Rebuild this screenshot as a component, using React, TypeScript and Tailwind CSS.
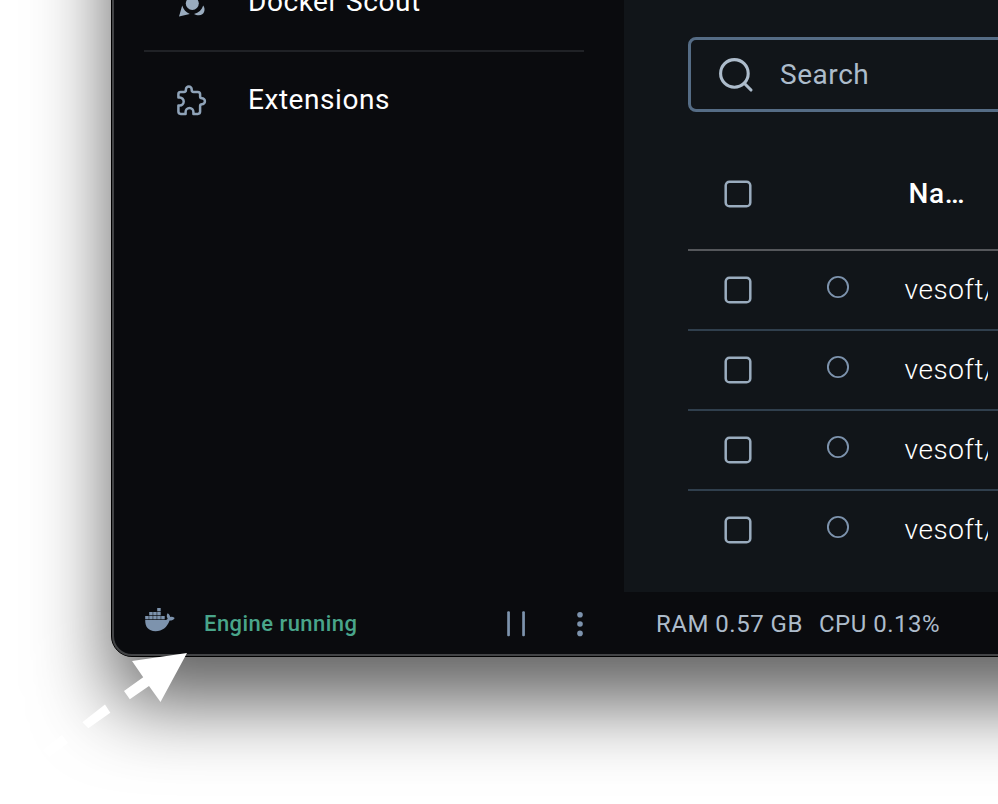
import React from "react";

function ScoutIcon() {
  return (
    <svg className="h-8 w-8 shrink-0" viewBox="0 0 32 32" fill="#9aacbe">
      <circle cx="16.3" cy="17.5" r="6.5" />
      <path d="M6.2 19.5C7.5 23.5 10 26.4 13.8 27.9L3 30.6Z" />
      <path d="M18 28C22.8 26.6 25.8 23.8 27.2 19.4C30 23 28.4 29.4 22.8 29.3C20.9 29.2 19.4 28.8 18 28Z" />
    </svg>
  );
}

function ExtensionIcon() {
  return (
    <svg className="mt-0.5 h-[34px] w-[34px] shrink-0" viewBox="0 0 34 34" fill="none" stroke="#8fa3b8" strokeWidth="2.5" strokeLinejoin="round">
      <path d="M3.4 10Q3.4 7.9 5.6 7.9H9Q10.9 7.9 10.9 6V5.4A2.9 2.9 0 0 1 16.7 5.4V6Q16.7 7.9 18.6 7.9H22.8Q25.1 7.9 25.1 10.2V12.6Q25.1 14.3 26.9 14.3A3 3 0 0 1 26.9 20.3Q25.1 20.3 25.1 22V27.6Q25.1 29.9 22.8 29.9H18.4V28A3.9 3.9 0 0 0 10.6 28V29.9H5.7Q3.4 29.9 3.4 27.6V21.4H4.8A3.9 3.9 0 0 0 4.8 13.6H3.4Z" />
    </svg>
  );
}

function WhaleIcon() {
  const blocks = [[12, 0], [4, 4], [8, 4], [12, 4], [0, 8], [4, 8], [8, 8], [12, 8], [16, 8]];
  return (
    <svg className="-mt-[6px] h-6 w-[30px] shrink-0" viewBox="0 0 30 24" fill="#7d93ad">
      {blocks.map(([x, y]) => (
        <rect key={`${x}-${y}`} x={x + 0.2} y={y} width="3.5" height="3.3" />
      ))}
      <path d="M0.2 12H19.4C21.4 12 22.2 11.5 22.7 10.7C21.5 8.8 21.5 7 22.6 5.3C24.3 6.4 25 7.6 25.1 9C26.7 8.6 28.4 9 29.7 10C28.7 11.9 27 12.6 24.6 12.6C22 19.6 17.5 23.2 10.5 23.2C3.2 23.2 0 18.5 0.2 12Z" />
    </svg>
  );
}

function Checkbox() {
  return (
    <svg className="ml-[34px] h-8 w-8 shrink-0" viewBox="0 0 32 32" fill="none" stroke="#9aacbe" strokeWidth="2.5">
      <rect x="3.7" y="3.7" width="24.6" height="24.6" rx="3.8" />
    </svg>
  );
}

function ImageRow() {
  return (
    <div className="flex h-20 items-center border-b-2 border-[#303f4d] last:border-transparent">
      <Checkbox />
      <svg className="-mt-1.5 ml-[72px] h-6 w-6 shrink-0" viewBox="0 0 24 24" fill="none" stroke="#7d93ad" strokeWidth="1.9">
        <circle cx="12" cy="12" r="10.1" />
      </svg>
      <div className="ml-[54px] w-[84px] overflow-hidden whitespace-nowrap pl-[0.5px] text-[28px] font-light leading-10 tracking-[0.6px] text-white">
        vesoft/
      </div>
    </div>
  );
}

function Sidebar() {
  return (
    <nav className="w-[510px] shrink-0 pl-[30px] pr-10">
      <div className="flex h-[50px] items-start text-white">
        <div className="-mt-4 flex h-9 items-center pl-8">
          <ScoutIcon />
          <span className="ml-[40px] text-[28px] leading-9 tracking-[0.55px]">Docker Scout</span>
        </div>
      </div>
      <div className="h-0.5 bg-[#202226]" />
      <div className="flex h-24 items-center pl-[31px] text-white">
        <ExtensionIcon />
        <span className="ml-[39px] text-[28px] tracking-[0.55px]">Extensions</span>
      </div>
    </nav>
  );
}

function ImagesPanel() {
  return (
    <main className="h-full flex-1 bg-[#111519] pl-16 pt-[37px]">
      <div className="flex h-[75px] items-center rounded-lg border-[3px] border-[#556c85] pl-[25px]">
        <svg className="h-10 w-10 shrink-0" viewBox="0 0 40 40" fill="none" stroke="#adbccb" strokeWidth="3.1" strokeLinecap="round">
          <circle cx="18.4" cy="18.4" r="13.8" />
          <path d="M28.5 28.5L35 35" />
        </svg>
        <span className="ml-6 text-[28px] tracking-[0.55px] text-[#adbccb]">Search</span>
      </div>
      <div className="mt-[27px] flex h-28 items-center border-b-2 border-[#55575b]">
        <Checkbox />
        <span className="ml-[154.5px] text-[28px] font-medium tracking-[0.6px] text-white">Na…</span>
      </div>
      <div>
        <ImageRow />
        <ImageRow />
        <ImageRow />
        <ImageRow />
      </div>
    </main>
  );
}

function StatusBar() {
  return (
    <footer className="flex h-[62px] items-center pl-[31px]">
      <WhaleIcon />
      <span className="ml-[29px] w-[296px] text-[22px] font-medium tracking-[0.45px] text-[#49a58a]">Engine running</span>
      <svg className="ml-[3px] h-8 w-[90px] shrink-0" viewBox="0 0 90 32" fill="#7d93ad">
        <rect x="4.2" y="4.3" width="2.7" height="25" rx="1" />
        <rect x="19.2" y="4.3" width="2.7" height="25" rx="1" />
        <circle cx="77" cy="7.7" r="2.8" />
        <circle cx="77" cy="17" r="2.8" />
        <circle cx="77" cy="26.4" r="2.8" />
      </svg>
      <span className="ml-[63px] mt-0.5 text-[24px] tracking-[0.5px] text-[#adbccb]">RAM 0.57 GB</span>
      <span className="ml-4 mt-0.5 text-[24px] tracking-[0.5px] text-[#adbccb]">CPU 0.13%</span>
    </footer>
  );
}

export default function App() {
  return (
    <div className="relative h-[804px] w-[998px] overflow-hidden bg-white font-[Roboto,sans-serif]">
      <div className="-mt-[200px] ml-[111px] w-[1400px] rounded-[21px] border border-black bg-[#0a0b0e] shadow-[0_46px_78px_rgba(0,0,0,0.62)]">
        <div className="rounded-[20px] border-2 border-[#434446] pt-[197px]">
          <div className="flex h-[592px]">
            <Sidebar />
            <ImagesPanel />
          </div>
          <StatusBar />
        </div>
      </div>
      <svg className="absolute left-0 top-[640px] h-[164px] w-[200px]" viewBox="0 640 200 164" fill="white">
        <path d="M187 653L132 661L143.2 677.2L124 691L129.8 699.3L149 686L160.5 702Z" />
        <path d="M82.3 722.2L105 704.6L110.3 712.8L88.3 728.2Z" />
        <path d="M43 750L62 735L68 743L49 757Z" />
      </svg>
    </div>
  );
}
